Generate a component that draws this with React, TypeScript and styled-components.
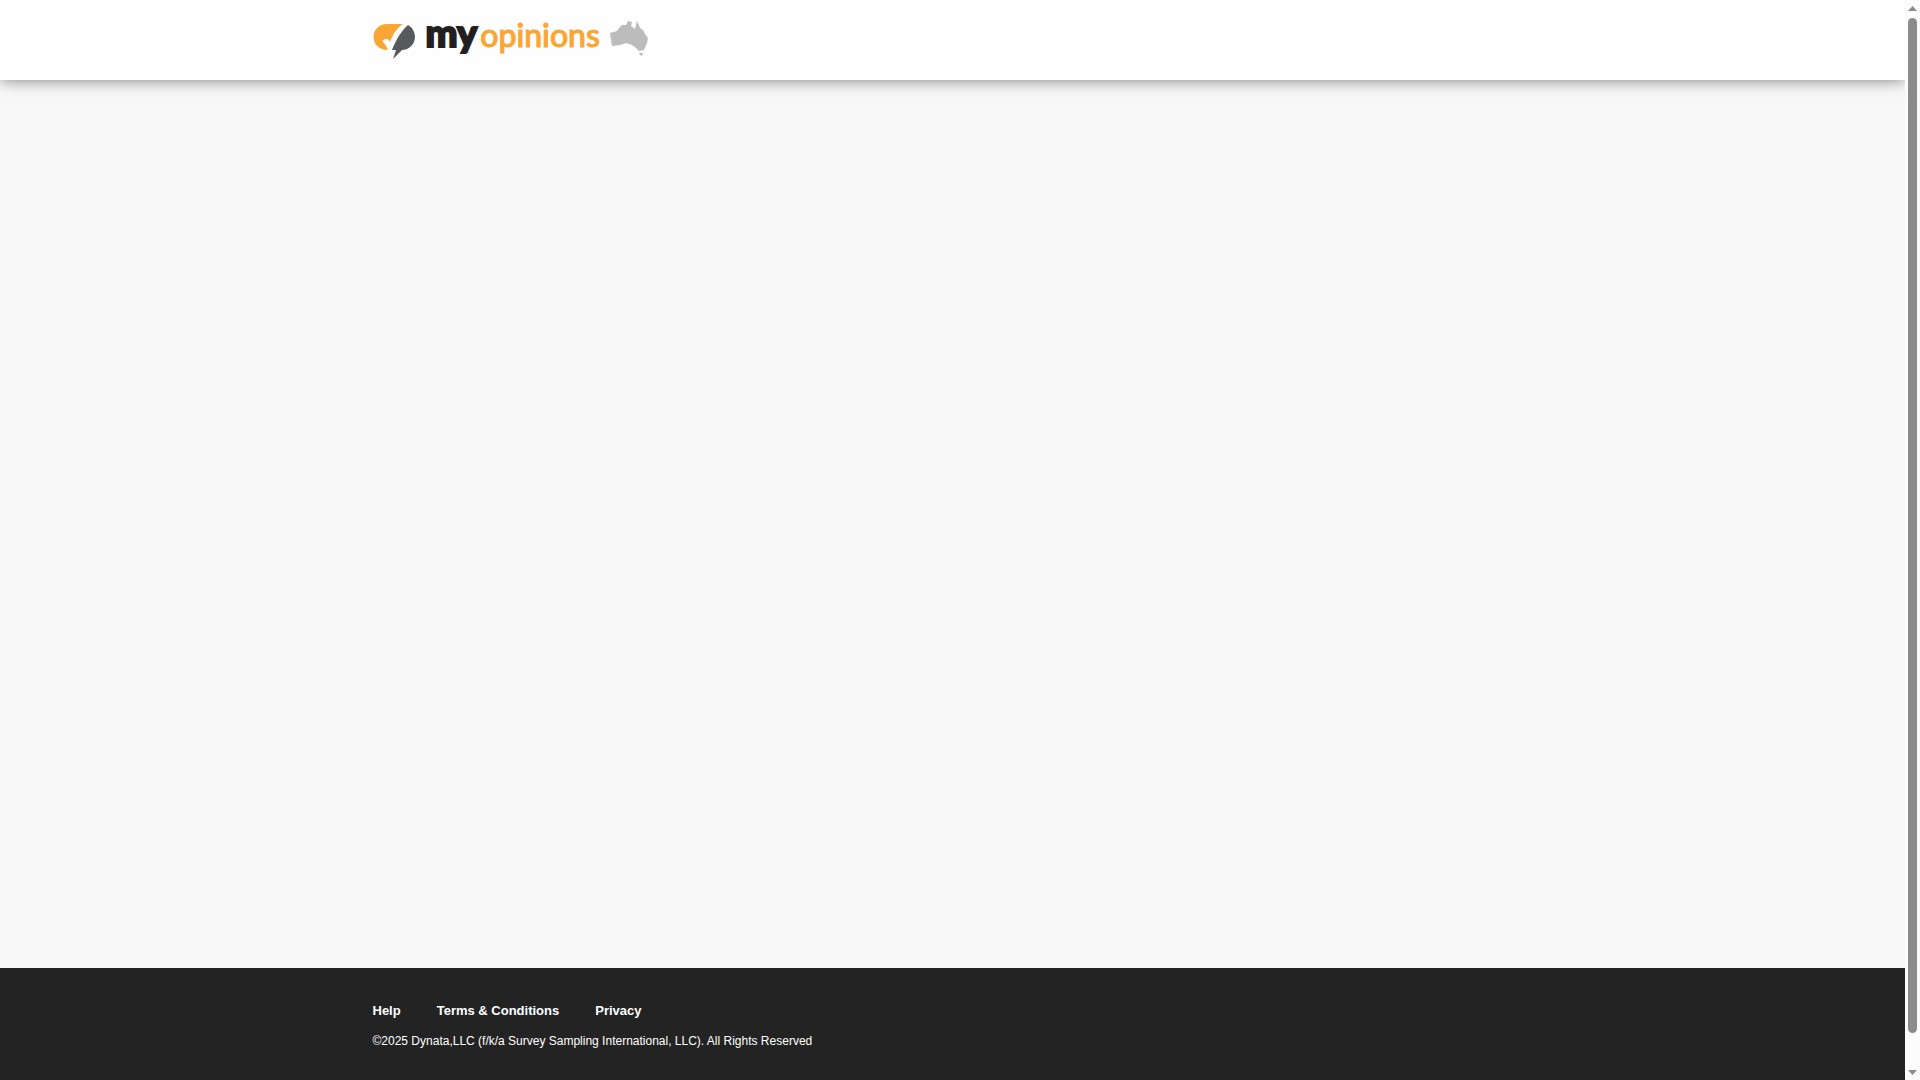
import React from "react";
import styled, { createGlobalStyle } from "styled-components";

const GlobalStyle = createGlobalStyle`
  * { box-sizing: border-box; }
  body {
    margin: 0;
    background: #f8f8f8;
    color: #ffffff;
    font-family: "Liberation Sans", Arial, sans-serif;
  }
`;

const Frame = styled.div`
  display: flex;
  height: 100vh;
  overflow: hidden;
`;

const Page = styled.div`
  display: flex;
  flex: 1;
  flex-direction: column;
  min-width: 0;
  overflow: hidden;
`;

const Container = styled.div`
  width: 100%;
  max-width: 1160px;
  margin: 0 auto;
`;

const Header = styled.header`
  height: 80px;
  padding-top: 16px;
  background: #fefefe;
  box-shadow: 0 0 15px rgba(0, 0, 0, 0.5);
`;

const Brand = styled.a`
  display: inline-flex;
  align-items: flex-start;
  height: 48px;
  text-decoration: none;
`;

const BubbleMark = styled.svg`
  width: 44px;
  height: 48px;
`;

const Wordmark = styled.span`
  display: flex;
  align-items: baseline;
  gap: 3px;
  margin-left: 9px;
  font-family: Lato, sans-serif;
  line-height: 32px;
`;

const My = styled.span`
  color: #231f20;
  font-size: 38px;
  font-weight: 900;
  -webkit-text-stroke: 2px #231f20;
`;

const Opinions = styled.span`
  color: #faa634;
  font-size: 32px;
  font-weight: 500;
  -webkit-text-stroke: 1px #faa634;
`;

const Country = styled.svg`
  width: 40px;
  height: 48px;
  margin-left: 9px;
`;

const Main = styled.main`
  flex: 1;
`;

const Footer = styled.footer`
  height: 112px;
  padding-top: 34px;
  background: #232323;
`;

const FooterNav = styled.nav`
  display: flex;
  gap: 36px;
`;

const FooterLink = styled.a`
  color: #ffffff;
  font-size: 13px;
  font-weight: 700;
  line-height: 18px;
  text-decoration: none;
`;

const Copyright = styled.p`
  margin: 12px 0 0;
  font-size: 12px;
  line-height: 18px;
`;

const Rail = styled.div`
  display: flex;
  flex-direction: column;
  align-items: center;
  width: 15px;
  background: #fcfcfc;
`;

const Arrow = styled.svg`
  width: 15px;
  height: 18px;
  fill: #8b8b8b;
`;

const Track = styled.div`
  flex: 1;
  width: 9px;
  padding-bottom: 29px;
`;

const Thumb = styled.div`
  height: 100%;
  border-radius: 5px;
  background: #8b8b8b;
`;

const links = ["Help", "Terms & Conditions", "Privacy"];

export default function App() {
  return (
    <Frame>
      <GlobalStyle />
      <Page>
        <Header>
          <Container>
            <Brand href="#" aria-label="myopinions Australia">
              <BubbleMark viewBox="0 0 44 48" aria-hidden="true">
                <path
                  fill="#faa634"
                  d="M14 8H30C24 12 20 18 17 26C16 23 14 22 10 24C9 25 10 26 11 27C13 29 14 32 15 34C6 34 .5 28 .5 21C.5 14 6 8 14 8Z"
                />
                <path
                  fill="#58595b"
                  d="M35 9C39 11 42 16 42 21C42 28 36 34 29 34L20 43L23 34H19C23 24 28 15 35 9Z"
                />
              </BubbleMark>
              <Wordmark>
                <My>my</My>
                <Opinions>opinions</Opinions>
              </Wordmark>
              <Country viewBox="0 0 40 48" fill="#bcbcbc" aria-hidden="true">
                <path d="M1 17L8 15L10 12L13 9L17 9L19 5L23 6L22 10L26 13L28 5L31 12L34 14L36 18L39 22L38 27L35 34L30 35L27 32L23 29L17 27L11 29L3 30L2 24Z" />
                <path d="M30 37L34 37L33 40L31 39Z" />
              </Country>
            </Brand>
          </Container>
        </Header>
        <Main />
        <Footer>
          <Container>
            <FooterNav aria-label="Footer">
              {links.map((label) => (
                <FooterLink key={label} href="#">
                  {label}
                </FooterLink>
              ))}
            </FooterNav>
            <Copyright>
              ©2025 Dynata,LLC (f/k/a Survey Sampling International, LLC). All
              Rights Reserved
            </Copyright>
          </Container>
        </Footer>
      </Page>
      <Rail aria-hidden="true">
        <Arrow viewBox="0 0 15 18">
          <path d="M7.5 6L12 11H3Z" />
        </Arrow>
        <Track>
          <Thumb />
        </Track>
        <Arrow viewBox="0 0 15 18">
          <path d="M3 8H12L7.5 13Z" />
        </Arrow>
      </Rail>
    </Frame>
  );
}
